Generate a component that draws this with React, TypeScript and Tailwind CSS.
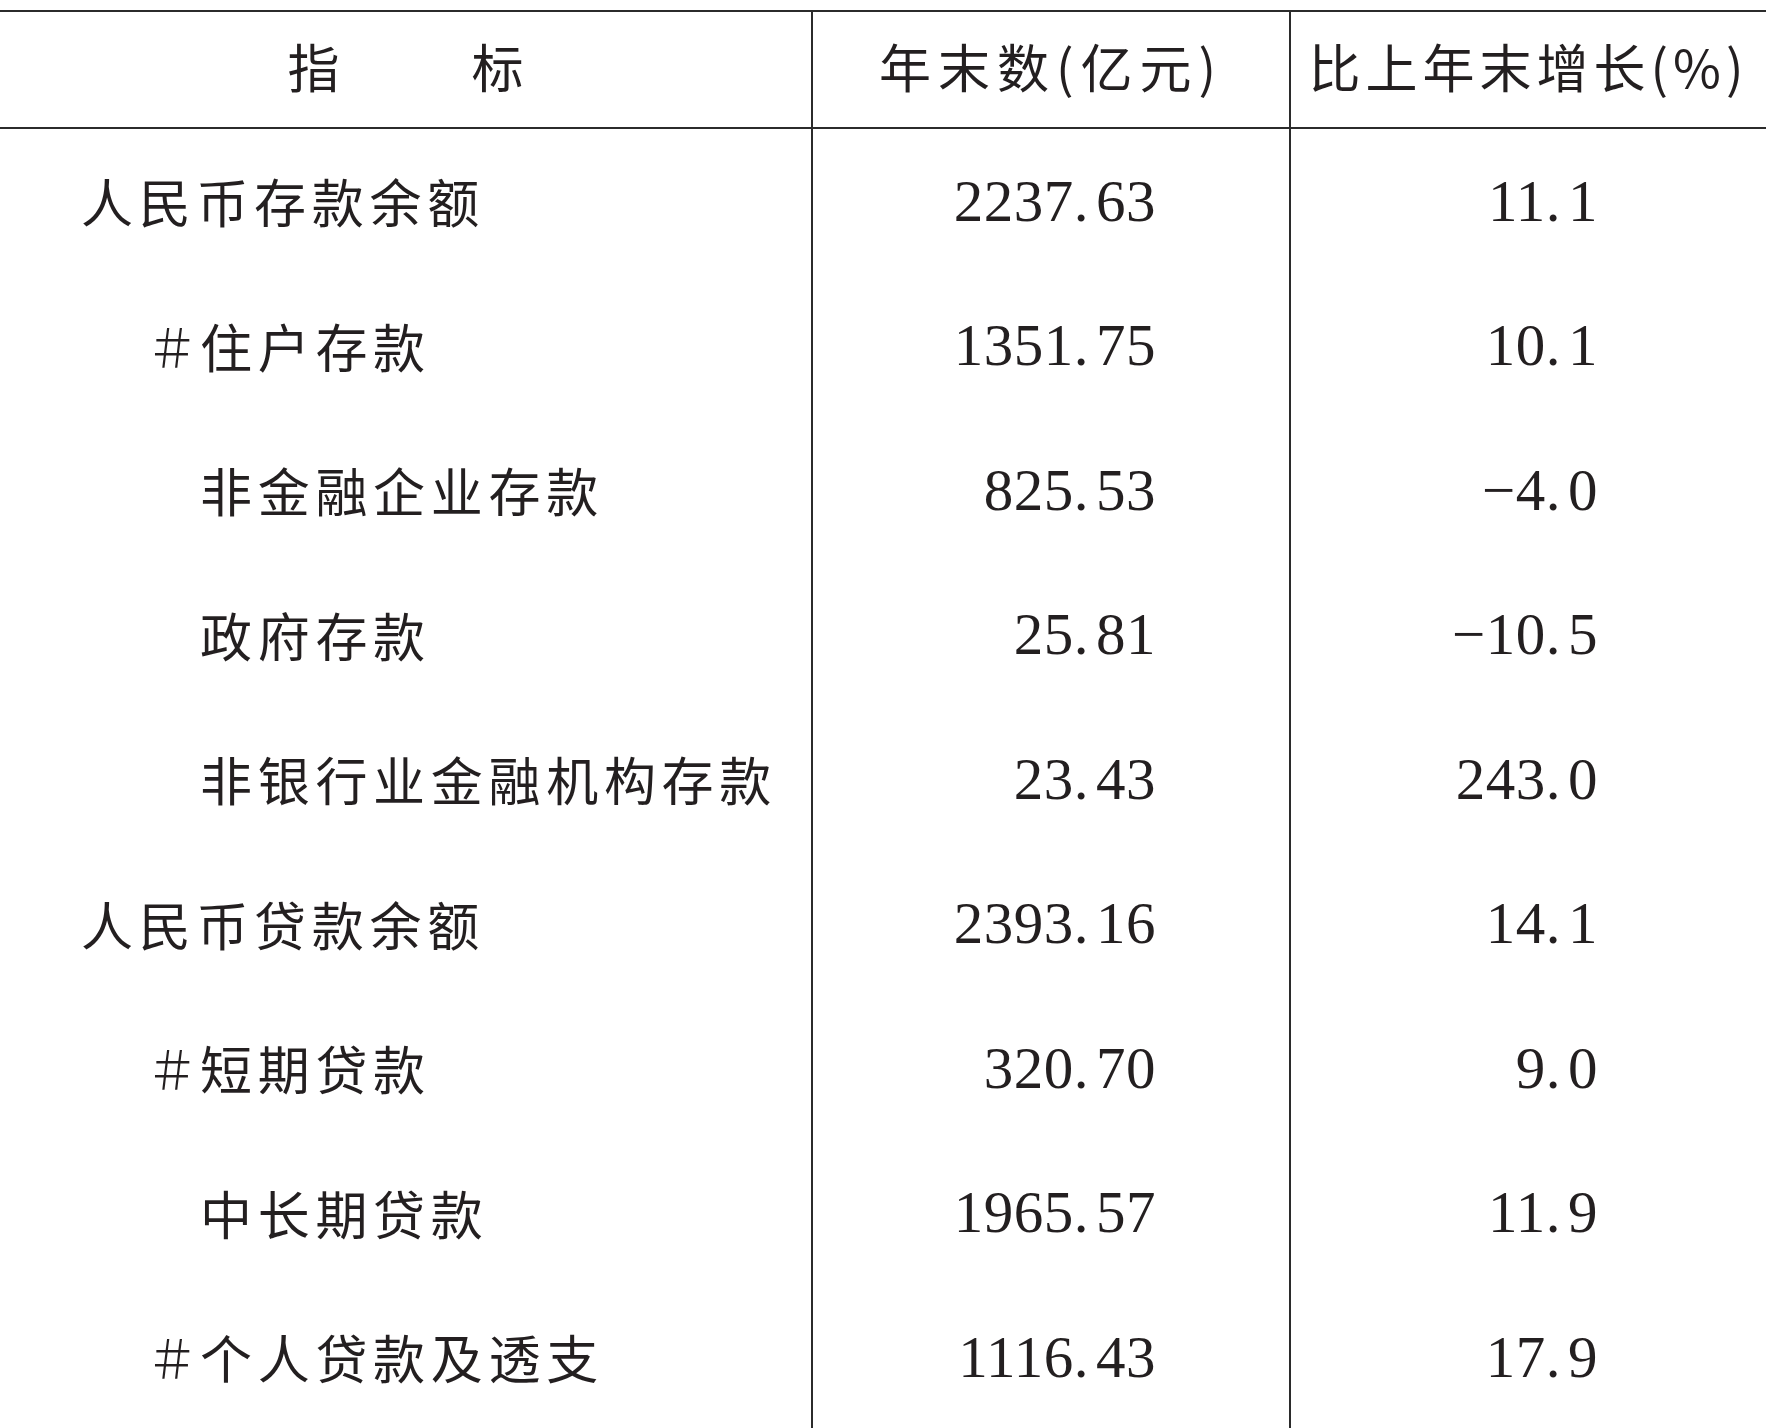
import React from "react";

type Row = { label: string; hash?: boolean; indent: 0 | 1; value: string; change: string };

const rows: Row[] = [
  { label: "人民币存款余额", indent: 0, value: "2237.63", change: "11.1" },
  { label: "住户存款", hash: true, indent: 1, value: "1351.75", change: "10.1" },
  { label: "非金融企业存款", indent: 1, value: "825.53", change: "−4.0" },
  { label: "政府存款", indent: 1, value: "25.81", change: "−10.5" },
  { label: "非银行业金融机构存款", indent: 1, value: "23.43", change: "243.0" },
  { label: "人民币贷款余额", indent: 0, value: "2393.16", change: "14.1" },
  { label: "短期贷款", hash: true, indent: 1, value: "320.70", change: "9.0" },
  { label: "中长期贷款", indent: 1, value: "1965.57", change: "11.9" },
  { label: "个人贷款及透支", hash: true, indent: 1, value: "1116.43", change: "17.9" },
];

const cjk = { fontFamily: '"Noto Sans CJK SC", "Noto Sans", sans-serif' };
const num = { fontFamily: '"Liberation Serif", "Noto Sans CJK SC", serif' };

function Num({ v }: { v: string }) {
  const [a, b] = v.split(".");
  return (
    <span className="text-[59px] leading-none tracking-[0.5px] whitespace-nowrap" style={num}>
      {a}
      <span className="mr-[7px]">.</span>
      {b}
    </span>
  );
}

export default function App() {
  return (
    <div className="w-[1766px] h-[1428px] bg-white overflow-hidden pt-[10px] text-[#231f20]">
      <div className="border-t-2 border-[#2b2b2b]">
        {/* header */}
        <div className="grid grid-cols-[813px_478px_475px] h-[117px] border-b-2 border-[#2b2b2b]">
          <div className="border-r-2 border-[#2b2b2b] flex items-center justify-center gap-[132px] pb-[8px] text-[52px] leading-none" style={cjk}>
            <span>指</span>
            <span>标</span>
          </div>
          <div className="border-r-2 border-[#2b2b2b] flex items-center justify-center pb-[8px] text-[52px] leading-none tracking-[7px]" style={cjk}>
            年末数(亿元)
          </div>
          <div className="flex items-center justify-center pb-[8px] text-[52px] leading-none tracking-[5px]" style={cjk}>
            比上年末增长(%)
          </div>
        </div>
        {/* body */}
        {rows.map((r, i) => (
          <div key={i} className="grid grid-cols-[813px_478px_475px] h-[144.5px]">
            <div className="border-r-2 border-[#2b2b2b] flex items-center">
              <span
                className={`text-[52px] leading-none tracking-[5.7px] whitespace-nowrap ${r.indent === 0 ? "pl-[81px]" : r.hash ? "pl-[146px]" : "pl-[200px]"}`}
                style={cjk}
              >
                {r.hash ? <span className="inline-block w-[54px] font-light">＃</span> : null}
                {r.label}
              </span>
            </div>
            <div className="border-r-2 border-[#2b2b2b] flex items-center justify-end pr-[133px]">
              <Num v={r.value} />
            </div>
            <div className="flex items-center justify-end pr-[168px]">
              <Num v={r.change} />
            </div>
          </div>
        ))}
      </div>
    </div>
  );
}
